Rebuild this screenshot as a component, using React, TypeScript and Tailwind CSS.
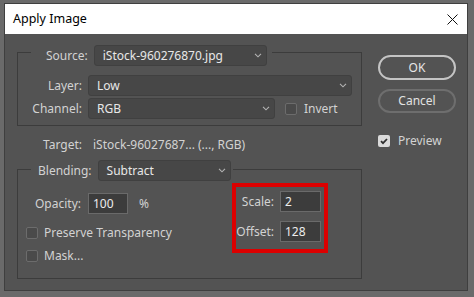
import React from 'react';

const Chevron = () => (
  <svg width="8" height="5" viewBox="0 0 8 5" className="shrink-0">
    <path d="M1 0.8l3 3 3-3" stroke="#b4b4b4" strokeWidth="1.1" fill="none" />
  </svg>
);

const Select = ({ value, className }: { value: string; className: string }) => (
  <div
    className={`flex items-center justify-between h-[21px] rounded-[3px] bg-[#474747] border border-[#404040] pl-[8px] pr-[4px] text-[#e8e8e8] ${className}`}
  >
    <span>{value}</span>
    <Chevron />
  </div>
);

const Field = ({ value, className }: { value: string; className: string }) => (
  <div
    className={`flex items-center h-[21px] bg-[#3c3c3c] border border-[#6a6a6a] pl-[4px] text-[#ececec] ${className}`}
  >
    {value}
  </div>
);

const Check = ({ checked }: { checked?: boolean }) =>
  checked ? (
    <div className="w-[12px] h-[12px] rounded-[2px] bg-[#dadada] flex items-center justify-center shrink-0">
      <svg width="10" height="10" viewBox="0 0 10 10">
        <path d="M2 5.2l2 2L8 3" stroke="#2e2e2e" strokeWidth="1.8" fill="none" />
      </svg>
    </div>
  ) : (
    <div className="w-[12px] h-[12px] rounded-[2px] border border-[#6c6c6c] bg-[#4a4a4a] shrink-0" />
  );

export default function App() {
  return (
    <div className="w-[474px] h-[297px] bg-[#6a6a6a] pt-[3px] pl-[4px] font-['Noto_Sans',sans-serif] text-[12px] leading-[16px] text-[#d2d2d2]">
      <div className="w-[464px] h-[288px] bg-[#535353] border border-[#3f3f3f] flex flex-col">
        {/* title bar */}
        <div className="h-[30px] bg-white flex items-center justify-between pl-[8px] pr-[9px] text-black text-[12.5px]">
          <span>Apply Image</span>
          <svg width="11" height="11" viewBox="0 0 11 11">
            <path d="M0.5 0.5l10 10M10.5 0.5l-10 10" stroke="#111" strokeWidth="1" />
          </svg>
        </div>

        <div className="flex">
          {/* left column */}
          <div className="pl-[12px] w-[357px]">
            {/* source group */}
            <div className="mt-[18px] w-[345px] h-[74px] border border-[#3c3c3c]">
              <div className="-mt-[8px] ml-[13px] w-fit bg-[#535353] flex items-center gap-[6px] pl-[15px] pr-[5px]">
                <span>Source:</span>
                <Select value="iStock-960276870.jpg" className="w-[173px]" />
              </div>
              <div className="mt-[9px] flex items-center gap-[6px]">
                <span className="w-[64px] text-right">Layer:</span>
                <Select value="Low" className="w-[264px]" />
              </div>
              <div className="mt-[2px] flex items-center">
                <span className="w-[64px] text-right">Channel:</span>
                <Select value="RGB" className="w-[187px] ml-[6px]" />
                <div className="ml-[10px]">
                  <Check />
                </div>
                <span className="ml-[7px]">Invert</span>
              </div>
            </div>

            {/* target */}
            <div className="mt-[11px] pl-[1px] flex items-center h-[16px]">
              <span className="w-[64px] text-right">Target:</span>
              <span className="ml-[11px]">iStock-96027687... (..., RGB)</span>
            </div>

            {/* blending group */}
            <div className="mt-[16px] w-[345px] h-[110px] border border-[#3c3c3c]">
              <div className="-mt-[10px] ml-[13px] w-fit bg-[#535353] flex items-center gap-[6px] pl-[7px] pr-[2px]">
                <span>Blending:</span>
                <Select value="Subtract" className="w-[133px]" />
              </div>
              <div className="flex items-start">
                <div className="w-[214px] pt-[12px]">
                  <div className="flex items-center">
                    <span className="w-[63px] text-right">Opacity:</span>
                    <Field value="100" className="w-[40px] ml-[7px]" />
                    <span className="ml-[11px]">%</span>
                  </div>
                  <div className="mt-[13px] h-[12px] flex items-center">
                    <div className="ml-[8px]">
                      <Check />
                    </div>
                    <span className="ml-[6px]">Preserve Transparency</span>
                  </div>
                  <div className="mt-[11px] h-[12px] flex items-center">
                    <div className="ml-[8px]">
                      <Check />
                    </div>
                    <span className="ml-[6px]">Mask...</span>
                  </div>
                </div>
                <div className="mt-[2px] w-[96px] h-[70px] border-4 border-[#dc0000] pt-[4px] pr-[3px] flex flex-col items-end gap-[9px]">
                  <div className="flex items-center gap-[6px]">
                    <span>Scale:</span>
                    <Field value="2" className="w-[41px]" />
                  </div>
                  <div className="flex items-center gap-[6px]">
                    <span>Offset:</span>
                    <Field value="128" className="w-[41px]" />
                  </div>
                </div>
              </div>
            </div>
          </div>

          {/* buttons */}
          <div className="ml-[16px] pt-[21px] flex flex-col">
            <div className="w-[78px] h-[25px] rounded-full border-2 border-[#c4c4c4] flex items-center justify-center text-[#e6e6e6]">
              OK
            </div>
            <div className="mt-[9px] w-[78px] h-[24px] rounded-full border-2 border-[#6e6e6e] flex items-center justify-center text-[#e2e2e2]">
              Cancel
            </div>
            <div className="mt-[20px] flex items-center">
              <Check checked />
              <span className="ml-[8px]">Preview</span>
            </div>
          </div>
        </div>
      </div>
    </div>
  );
}
